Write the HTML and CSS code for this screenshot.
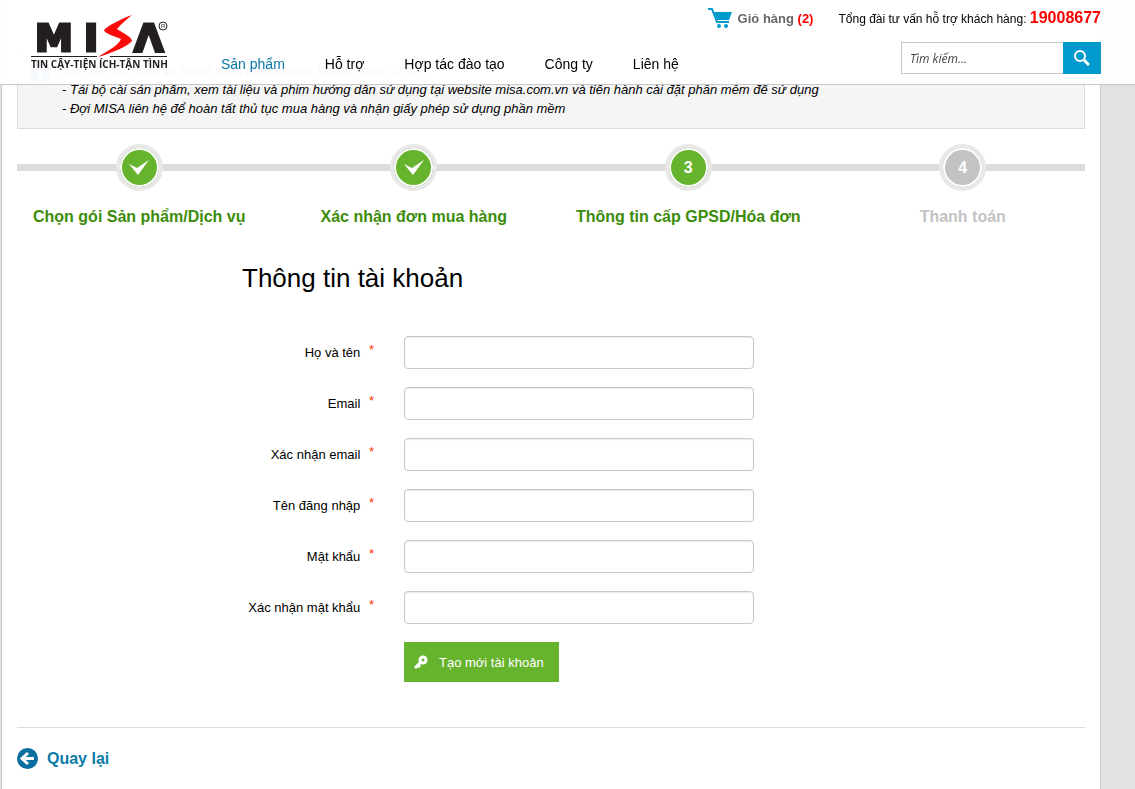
FILE: index.html
```
<!DOCTYPE html>
<html lang="vi">
<head>
    <meta charset="utf-8">
    <title>MISA - Thông tin tài khoản</title>
    <link rel="stylesheet" href="styles.css">
</head>
<body>
    <header class="header">
        <a href="#" class="logo">
            <svg width="140" height="58" viewBox="0 0 140 58" role="img" aria-label="MISA">
                <g class="logo-name">
                    <text x="4" y="36">M</text>
                    <text x="53" y="36">I</text>
                    <text x="103" y="36">Λ</text>
                </g>
                <path fill="#fb0a0a" d="M101 0C90 4 78 10 73 15C74 19 84 21 90 24C87 31 76 36 67 42C80 38 96 32 101 26C101 22 92 18 86 14C90 9 96 4 101 0Z"/>
                <path fill="#231f20" d="M0 41h66v1H0zM79 41h57v1H79z"/>
                <circle cx="132" cy="11" r="4" fill="none" stroke="#231f20"/>
                <text class="logo-mark" x="130" y="13">R</text>
                <text class="logo-slogan" x="0" y="53">TIN CẬY-TIỆN ÍCH-TẬN TÌNH</text>
            </svg>
        </a>
        <nav class="nav">
            <a href="#" class="active">Sản phẩm</a>
            <a href="#">Hỗ trợ</a>
            <a href="#">Hợp tác đào tạo</a>
            <a href="#">Công ty</a>
            <a href="#">Liên hệ</a>
        </nav>
        <div class="header-right">
            <div class="top-line">
                <a href="#" class="cart">
                    <svg width="24" height="20" viewBox="0 0 24 20">
                        <path fill="none" stroke="#009acd" stroke-width="2" d="M0 1h4l5 13h12"/>
                        <path fill="#009acd" d="M6 4h18l-3 8H9z"/>
                        <circle cx="11" cy="18" r="2" fill="#009acd"/>
                        <circle cx="18" cy="18" r="2" fill="#009acd"/>
                    </svg>
                    <span>Giỏ hàng <b>(2)</b></span>
                </a>
                <span class="hotline">Tổng đài tư vấn hỗ trợ khách hàng: <b>19008677</b></span>
            </div>
            <form class="search">
                <input type="text" placeholder="Tìm kiếm..." aria-label="Tìm kiếm">
                <button type="button" aria-label="Tìm">
                    <svg width="16" height="16" viewBox="0 0 16 16" fill="none" stroke="#fff">
                        <circle cx="6" cy="6" r="5" stroke-width="2"/>
                        <path d="M10 10l5 5" stroke-width="3"/>
                    </svg>
                </button>
            </form>
        </div>
    </header>

    <main class="content">
        <div class="notice">
            <svg width="22" height="22" viewBox="0 0 22 22">
                <circle cx="11" cy="11" r="11" fill="#0a6fa8"/>
                <path fill="#fff" d="M10 4h3v3h-3zM8 9h5v7h2v2H8v-2h2v-5H8z"/>
            </svg>
            <div>
                Sau khi đặt hàng và thanh toán thành công, khách hàng có thể:<br>
                - Tải bộ cài sản phẩm, xem tài liệu và phim hướng dẫn sử dụng tại website misa.com.vn và tiến hành cài đặt phần mềm để sử dụng<br>
                - Đợi MISA liên hệ để hoàn tất thủ tục mua hàng và nhận giấy phép sử dụng phần mềm
            </div>
        </div>

        <ol class="steps">
            <li>
                <span class="circle">
                    <svg width="20" height="16" viewBox="0 0 20 16"><path fill="#fff" d="M0 4l8 4L20 0L9 15z"/></svg>
                </span>
                Chọn gói Sản phẩm/Dịch vụ
            </li>
            <li>
                <span class="circle">
                    <svg width="20" height="16" viewBox="0 0 20 16"><path fill="#fff" d="M0 4l8 4L20 0L9 15z"/></svg>
                </span>
                Xác nhận đơn mua hàng
            </li>
            <li><span class="circle">3</span>Thông tin cấp GPSD/Hóa đơn</li>
            <li class="disabled"><span class="circle">4</span>Thanh toán</li>
        </ol>

        <form class="account">
            <h1>Thông tin tài khoản</h1>
            <div class="row">
                <label for="fullName">Họ và tên <span>*</span></label>
                <input type="text" id="fullName" name="fullName">
            </div>
            <div class="row">
                <label for="email">Email <span>*</span></label>
                <input type="text" id="email" name="email">
            </div>
            <div class="row">
                <label for="email2">Xác nhận email <span>*</span></label>
                <input type="text" id="email2" name="email2">
            </div>
            <div class="row">
                <label for="userName">Tên đăng nhập <span>*</span></label>
                <input type="text" id="userName" name="userName">
            </div>
            <div class="row">
                <label for="password">Mật khẩu <span>*</span></label>
                <input type="password" id="password" name="password">
            </div>
            <div class="row">
                <label for="password2">Xác nhận mật khẩu <span>*</span></label>
                <input type="password" id="password2" name="password2">
            </div>
            <button type="button" class="btn-create">
                <svg width="14" height="14" viewBox="0 0 14 14">
                    <circle cx="9" cy="5" r="3" fill="none" stroke="#fff" stroke-width="3"/>
                    <path d="M8 6l-7 7M3 9l3 3" fill="none" stroke="#fff" stroke-width="3"/>
                </svg>
                Tạo mới tài khoản
            </button>
        </form>

        <div class="footer">
            <a href="#">
                <svg width="21" height="21" viewBox="0 0 21 21">
                    <circle cx="10.5" cy="10.5" r="10.5" fill="#0a6fa0"/>
                    <path d="M11 5l-6 5.500l6 5.500M6 10.500h11" fill="none" stroke="#fff" stroke-width="3"/>
                </svg>
                Quay lại
            </a>
        </div>
    </main>
</body>
</html>
```
FILE: styles.css
```
* {
  box-sizing: border-box;
}

body {
  margin: 0;
  background: #e2e2e2;
  color: #000;
  font-family: "Liberation Sans", Arial, sans-serif;
  font-size: 13px;
}

a {
  text-decoration: none;
}

/* header stays over the page while scrolling */
.header {
  position: fixed;
  top: 0;
  left: 0;
  right: 0;
  z-index: 10;
  display: flex;
  height: 85px;
  padding: 0 34px 0 31px;
  background: rgba(255, 255, 255, 0.97);
  border-bottom: 1px solid #c8c8c8;
}

.logo {
  padding-top: 15px;
}

.logo-name {
  font: bold 38px "DejaVu Sans", sans-serif;
  fill: #231f20;
  stroke: #231f20;
  stroke-width: 3px;
}

.logo-mark {
  font-size: 6px;
  fill: #231f20;
}

.logo-slogan {
  font: bold 10px "Open Sans", sans-serif;
  fill: #231f20;
}

.nav {
  display: flex;
  gap: 40px;
  margin-left: 50px;
  padding-top: 54px;
  font-size: 14px;
  line-height: 20px;
  white-space: nowrap;
}

.nav a {
  color: #000;
}

.nav .active {
  color: #0a78a8;
}

.header-right {
  display: flex;
  flex-direction: column;
  align-items: flex-end;
  gap: 14px;
  margin-left: auto;
  padding-top: 8px;
}

.top-line {
  display: flex;
  align-items: center;
  gap: 25px;
  height: 20px;
  white-space: nowrap;
}

.cart {
  display: flex;
  align-items: center;
  gap: 6px;
  color: #666;
  font-weight: bold;
}

.cart b, .hotline b {
  color: #f00;
}

.hotline {
  font-size: 12px;
}

.hotline b {
  font-size: 16px;
}

.search {
  display: flex;
  width: 200px;
  height: 32px;
}

.search input {
  flex: 1;
  min-width: 0;
  padding: 0 8px;
  border: 1px solid #c8c8c8;
  border-right: 0;
  font: italic 12px "Open Sans", sans-serif;
}

.search input::placeholder {
  color: #444;
}

.search button {
  display: flex;
  align-items: center;
  justify-content: center;
  width: 38px;
  padding: 0;
  border: 0;
  background: #009acd;
}

.content {
  min-height: 100vh;
  margin: 0 34px 0 1px;
  padding: 50px 15px 20px;
  background: #fff;
  border: solid #c8c8c8;
  border-width: 0 1px;
}

.notice {
  display: flex;
  gap: 11px;
  padding: 10px 11px;
  background: #f5f5f5;
  border: 1px solid #dcdcdc;
  font-style: italic;
  line-height: 19px;
}

.notice svg {
  flex: none;
}

.steps {
  display: grid;
  grid-template-columns: repeat(4, 1fr);
  margin: 15px -15px 0;
  padding: 0;
  background: linear-gradient(#dcdcdc, #dcdcdc) center 20px / calc(100% - 30px) 7px no-repeat;
  list-style: none;
}

.steps li {
  display: flex;
  flex-direction: column;
  align-items: center;
  gap: 16px;
  color: #3c8c0a;
  font-size: 16px;
  font-weight: bold;
  line-height: 20px;
}

.circle {
  display: flex;
  align-items: center;
  justify-content: center;
  width: 47px;
  height: 47px;
  border: 4px solid #e8e8e8;
  border-radius: 50%;
  background: #66b32e;
  box-shadow: inset 0 0 0 2px #fff;
  color: #fff;
}

.steps .disabled {
  color: #c3c3c3;
}

.disabled .circle {
  background: #c3c3c3;
}

.account {
  display: flex;
  flex-direction: column;
  gap: 18px;
  margin: 33px 0 45px 225px;
}

.account h1 {
  margin: 0 0 22px;
  font-size: 26px;
  font-weight: normal;
  line-height: 36px;
}

.row {
  display: flex;
  align-items: center;
  gap: 30px;
}

.row label {
  width: 132px;
  text-align: right;
  white-space: nowrap;
}

.row label span {
  margin-left: 5px;
  color: #f30;
  line-height: 0;
  vertical-align: 3px;
}

.row input {
  width: 350px;
  height: 33px;
  padding: 4px 8px;
  border: 1px solid #c8c8c8;
  border-radius: 4px;
  box-shadow: inset 0 1px 1px rgba(0, 0, 0, 0.08);
}

.btn-create {
  display: flex;
  align-items: center;
  gap: 11px;
  align-self: flex-start;
  height: 40px;
  margin-left: 162px;
  padding: 0 15px 0 10px;
  border: 0;
  background: #66b32e;
  color: #fff;
  font: 13px "Liberation Sans", Arial, sans-serif;
}

.footer {
  padding-top: 20px;
  border-top: 1px solid #dcdcdc;
}

.footer a {
  display: inline-flex;
  align-items: center;
  gap: 9px;
  color: #0a7ca8;
  font-size: 16px;
  font-weight: bold;
}
```
